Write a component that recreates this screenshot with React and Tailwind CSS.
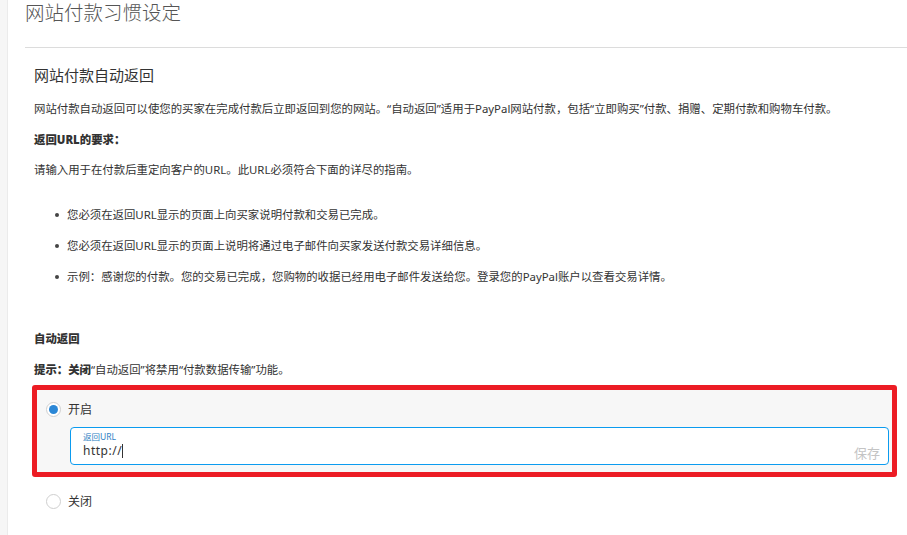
import React from 'react';

const Radio = ({ checked }) => (
    <span className="w-[15px] h-[15px] rounded-full border border-[#cfcfcf] bg-white flex items-center justify-center shrink-0">
        {checked && <span className="w-[9px] h-[9px] rounded-full bg-[#2b87d6]" />}
    </span>
);

const Bullet = ({ children }) => (
    <li className="flex items-center h-[18px]">
        <span className="w-[4px] h-[4px] rounded-full bg-[#444] ml-[21px] mr-[8px]" />
        <span>{children}</span>
    </li>
);

const App = () => {
    return (
        <div className="flex min-h-screen bg-white text-[#333] font-['Noto_Sans','Noto_Sans_CJK_SC',sans-serif]">
            {/* left gutter */}
            <div className="w-[8px] shrink-0 bg-[#f6f6f6] border-r border-[#ebebeb]" />

            <div className="flex-1 pl-[17px]">
                <div className="h-[48px] border-b border-[#dcdcdc]">
                    <h1 className="text-[19.5px] leading-[26px] font-light text-[#555]">网站付款习惯设定</h1>
                </div>

                <div className="pl-[9px] pr-[10px] text-[11.4px] leading-[18px]">
                    <h2 className="mt-[17px] text-[15px] leading-[20px] text-[#333]">网站付款自动返回</h2>
                    <p className="mt-[15px]">
                        网站付款自动返回可以使您的买家在完成付款后立即返回到您的网站。“自动返回”适用于PayPal网站付款，包括“立即购买”付款、捐赠、定期付款和购物车付款。
                    </p>
                    <p className="mt-[13px] font-black">返回URL的要求：</p>
                    <p className="mt-[12px]">请输入用于在付款后重定向客户的URL。此URL必须符合下面的详尽的指南。</p>

                    <ul className="mt-[27px] flex flex-col gap-[13px]">
                        <Bullet>您必须在返回URL显示的页面上向买家说明付款和交易已完成。</Bullet>
                        <Bullet>您必须在返回URL显示的页面上说明将通过电子邮件向买家发送付款交易详细信息。</Bullet>
                        <Bullet>示例：感谢您的付款。您的交易已完成，您购物的收据已经用电子邮件发送给您。登录您的PayPal账户以查看交易详情。</Bullet>
                    </ul>

                    <p className="mt-[44px] font-black">自动返回</p>
                    <p className="mt-[13px]">
                        <span className="font-black">提示：关闭</span>“自动返回”将禁用“付款数据传输”功能。
                    </p>

                    {/* highlighted option */}
                    <div className="mt-[6px] -ml-[2px] border-[5px] border-[#ec1c24] rounded-[3px]">
                        <div className="bg-[#f7f7f7] pt-[12px] pb-[7px] pl-[9px] pr-[3px]">
                            <label className="flex items-center gap-[7px] h-[15px]">
                                <Radio checked />
                                <span className="text-[12px]">开启</span>
                            </label>
                            <div className="mt-[10px] ml-[24px] h-[38px] bg-white border border-[#0b9bef] rounded-[4px] relative pl-[12px]">
                                <div className="pt-[3px] text-[8.5px] leading-[11px] text-[#2d7fc4]">返回URL</div>
                                <div className="text-[12px] leading-[18px] tracking-[0.5px] text-[#333] flex items-center">
                                    http://<span className="w-px h-[14px] bg-[#333]" />
                                </div>
                                <span className="absolute right-[8px] bottom-[2px] text-[13px] leading-[18px] text-[#c4c4c4]">保存</span>
                            </div>
                        </div>
                    </div>

                    <label className="mt-[17px] ml-[12px] flex items-center gap-[7px] h-[15px]">
                        <Radio />
                        <span className="text-[12px]">关闭</span>
                    </label>
                </div>
            </div>
        </div>
    );
};

export default App;
